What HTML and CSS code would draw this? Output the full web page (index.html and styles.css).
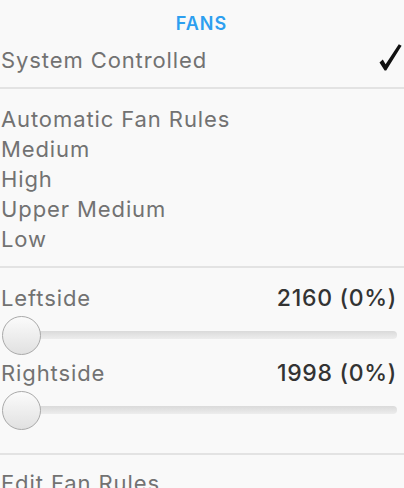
FILE: index.html
```html
<!DOCTYPE html>
<html lang="en">
<head>
  <meta charset="UTF-8">
  <title>Fans</title>
  <link rel="stylesheet" href="styles.css">
</head>
<body>
  <div class="painel">
    <h2 class="titulo">FANS</h2>

    <div class="linha">
      <span>System Controlled</span>
      <svg class="check" width="23" height="27" viewBox="0 0 23 27">
        <path d="M0.5 18.5 L3.8 15.6 L6.6 20.2 L19.8 0.2 L22.6 1.8 L7.2 26.4 L5.6 26.4 Z" fill="#111"/>
      </svg>
    </div>

    <hr class="divisor">

    <ul class="regras">
      <li>Automatic Fan Rules</li>
      <li>Medium</li>
      <li>High</li>
      <li>Upper Medium</li>
      <li>Low</li>
    </ul>

    <hr class="divisor">

    <div class="ventoinhas">
      <div class="linha">
        <span>Leftside</span>
        <span class="valor">2160 (0%)</span>
      </div>
      <div class="slider">
        <div class="trilho"></div>
        <div class="botao"></div>
      </div>

      <div class="linha">
        <span>Rightside</span>
        <span class="valor">1998 (0%)</span>
      </div>
      <div class="slider">
        <div class="trilho"></div>
        <div class="botao"></div>
      </div>
    </div>

    <hr class="divisor">

    <div class="linha editar">
      <span>Edit Fan Rules</span>
    </div>
  </div>
</body>
</html>
```

FILE: styles.css
```css
* {
  box-sizing: border-box;
}

body {
  margin: 0;
  background-color: #f9f9f9;
  color: #727272;
  font-family: Inter, "Liberation Sans", sans-serif;
  font-size: 22px;
  letter-spacing: 0.9px;
  overflow: hidden;
}

.painel {
  padding: 0 2px 0 1px;
}

.titulo {
  margin: 0;
  padding-top: 13px;
  height: 45px;
  text-align: center;
  color: #2d9ff0;
  font-size: 18px;
  font-weight: 600;
  line-height: 22px;
  letter-spacing: 1px;
}

.linha {
  display: flex;
  justify-content: space-between;
  align-items: center;
  height: 30px;
  line-height: 30px;
}

.check {
  display: block;
  align-self: flex-start;
  margin-top: -1px;
}

.divisor {
  margin: 12px -2px 0 -1px;
  border: none;
  height: 2px;
  background: #e3e3e3;
}

.regras {
  list-style: none;
  margin: 0;
  padding: 15px 0 0;
}

.regras li {
  height: 30px;
  line-height: 30px;
}

.ventoinhas {
  padding: 15px 0 8px;
}

.valor {
  margin-right: 5px;
  color: #333;
  font-size: 23px;
  font-weight: 500;
  letter-spacing: 0.7px;
}

.slider {
  display: grid;
  align-items: center;
  height: 44px;
  margin-bottom: 1px;
}

.trilho,
.botao {
  grid-area: 1 / 1;
}

.trilho {
  height: 8px;
  margin: 0 5px 0 18px;
  border-radius: 4px;
  background: linear-gradient(#dadada, #ededed);
}

.botao {
  width: 39px;
  height: 39px;
  margin-left: 1px;
  border-radius: 50%;
  border: 1px solid #a9a9a9;
  background: linear-gradient(#fbfbfb, #e1e1e1);
}

.editar {
  margin-top: 13px;
}
```
